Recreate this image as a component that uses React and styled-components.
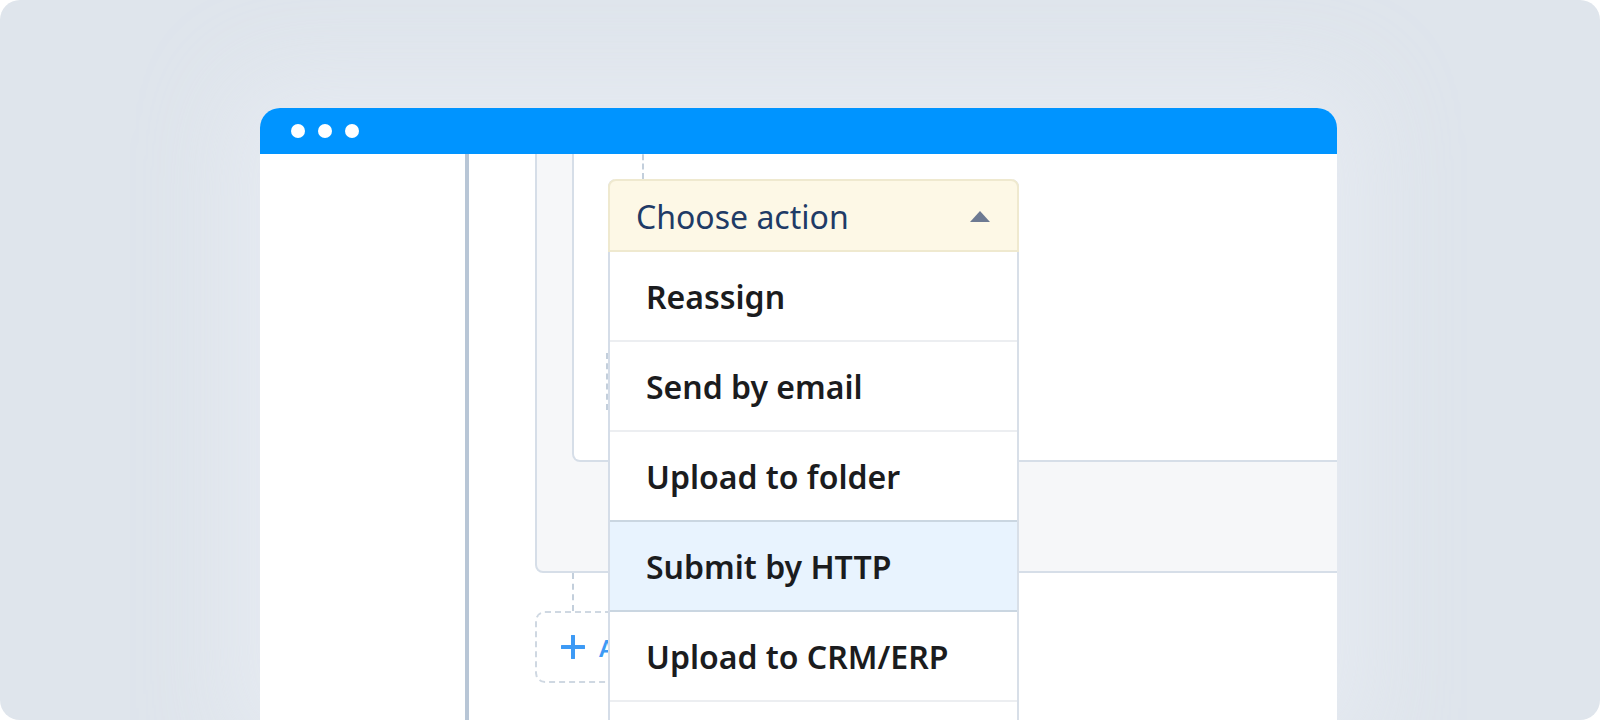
import React from 'react';
import styled, { createGlobalStyle } from 'styled-components';

const GlobalStyle = createGlobalStyle`
  html, body {
    margin: 0;
    padding: 0;
    background: #ffffff;
    font-family: "Noto Sans", "Open Sans", sans-serif;
  }
`;

// Outer rounded backdrop
const Frame = styled.div`
  width: 1600px;
  height: 720px;
  box-sizing: border-box;
  background: #dfe5ec;
  border-radius: 20px;
  overflow: hidden;
  padding: 108px 0 0 260px;
  display: flex;
`;

// Browser-like window
const Window = styled.div`
  width: 1077px;
  display: flex;
  flex-direction: column;
  background: #ffffff;
  border-radius: 20px 20px 0 0;
  overflow: hidden;
  box-shadow: 0 0 90px 30px rgba(232, 237, 243, 0.7);
`;

const TitleBar = styled.div`
  height: 46px;
  flex-shrink: 0;
  background: #0094ff;
  display: flex;
  align-items: center;
  gap: 13px;
  padding-left: 31px;
`;

const Dot = styled.span`
  width: 14px;
  height: 14px;
  border-radius: 50%;
  background: #ffffff;
`;

const Body = styled.div`
  flex: 1;
  display: flex;
  overflow: hidden;
`;

const Sidebar = styled.div`
  width: 205px;
  flex-shrink: 0;
  background: #ffffff;
`;

const Divider = styled.div`
  width: 4px;
  flex-shrink: 0;
  background: #b8c6d6;
`;

const Content = styled.div`
  flex: 1;
  position: relative;
  padding-left: 66px;
  display: flex;
  flex-direction: column;
`;

// Grey step container that holds the action card
const StepBox = styled.div`
  margin-top: -30px;
  margin-right: -40px;
  background: #f6f7f9;
  border: 2px solid #d6dee8;
  border-radius: 8px;
  padding: 0 0 109px 35px;
`;

const ActionCard = styled.div`
  height: 336px;
  box-sizing: border-box;
  background: #ffffff;
  border: 2px solid #d6dee8;
  border-top: none;
  border-radius: 0 0 8px 8px;
  display: flex;
  flex-direction: column;
`;

const DashedLine = styled.div`
  width: 0;
  height: ${({ $h }) => $h}px;
  margin-left: ${({ $left }) => $left}px;
  margin-top: ${({ $top = 0 }) => $top}px;
  border-left: 2px dashed #c3cfdc;
`;

const AddBox = styled.div`
  width: 260px;
  height: 72px;
  box-sizing: border-box;
  border: 2px dashed #cfd8e2;
  border-radius: 10px;
  display: flex;
  align-items: center;
  gap: 14px;
  padding-left: 24px;
  color: #3d9af5;
  font-size: 24px;
  font-weight: 600;
`;

// Dropdown menu laid over the builder
const Dropdown = styled.div`
  position: absolute;
  left: 139px;
  top: 25px;
  width: 411px;
  box-sizing: border-box;
  background: #ffffff;
  border-left: 2px solid #d5dde8;
  border-right: 2px solid #d8dfe8;
  border-radius: 8px 8px 0 0;
`;

const DropdownHeader = styled.div`
  height: 73px;
  box-sizing: border-box;
  margin: 0 -2px;
  background: #fdf8e6;
  border: 2px solid #efe9cf;
  border-radius: 8px 8px 0 0;
  display: flex;
  align-items: center;
  justify-content: space-between;
  padding: 2px 27px 0 26px;
  color: #1f3b66;
  font-size: 32px;
`;

const Caret = styled.span`
  width: 0;
  height: 0;
  border-left: 10px solid transparent;
  border-right: 10px solid transparent;
  border-bottom: 11px solid #6d7a92;
`;

const Option = styled.div`
  height: 90px;
  box-sizing: border-box;
  display: flex;
  align-items: center;
  padding-left: 36px;
  font-size: 32px;
  font-weight: 600;
  color: #1b1c1e;
  background: ${({ $active }) => ($active ? '#e8f3fe' : '#ffffff')};
  border-bottom: 2px solid ${({ $active }) => ($active ? '#cad6e1' : '#eceef1')};
  box-shadow: ${({ $active }) => ($active ? '0 -2px 0 #cad6e1' : 'none')};
`;

const PlusIcon = () => (
  <svg width="24" height="24" viewBox="0 0 24 24">
    <path d="M12 1v22M1 12h22" stroke="#3d9af5" strokeWidth="4" strokeLinecap="round" />
  </svg>
);

const options = ['Reassign', 'Send by email', 'Upload to folder', 'Submit by HTTP', 'Upload to CRM/ERP', ''];

export default function App() {
  return (
    <>
      <GlobalStyle />
      <Frame>
        <Window>
          <TitleBar>
            <Dot />
            <Dot />
            <Dot />
          </TitleBar>
          <Body>
            <Sidebar />
            <Divider />
            <Content>
              <StepBox>
                <ActionCard>
                  <DashedLine $h={53} $left={68} />
                  <DashedLine $h={57} $left={32} $top={174} />
                </ActionCard>
              </StepBox>
              <DashedLine $h={38} $left={37} />
              <AddBox>
                <PlusIcon />
                <span>Add action</span>
              </AddBox>
              <Dropdown>
                <DropdownHeader>
                  <span>Choose action</span>
                  <Caret />
                </DropdownHeader>
                {options.map((o, i) => (
                  <Option key={i} $active={o === 'Submit by HTTP'}>
                    {o}
                  </Option>
                ))}
              </Dropdown>
            </Content>
          </Body>
        </Window>
      </Frame>
    </>
  );
}
